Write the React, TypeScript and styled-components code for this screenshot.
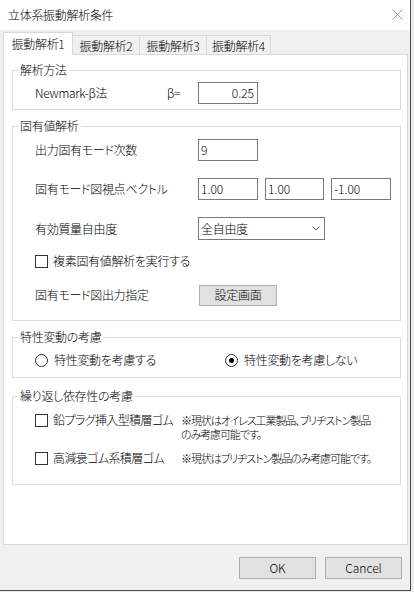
import styled, { createGlobalStyle } from "styled-components";

const GlobalStyle = createGlobalStyle`
	html, body {
		margin: 0;
		padding: 0;
		background: #ececec;
	}

	body {
		font-family: "Noto Sans CJK JP", "Noto Sans", sans-serif;
		font-size: 12px;
		font-weight: 300;
		letter-spacing: -0.3px;
		color: #000;
		font-feature-settings: "palt";
	}

	* {
		box-sizing: border-box;
	}
`;

const Window = styled.div`
	display: flex;
	flex-direction: column;
	width: 411px;
	height: 591px;
	background: #f0f0f0;
	border-right: 1px solid #4a4a4a;
	border-bottom: 1px solid #4a4a4a;
`;

const TitleBar = styled.div`
	display: flex;
	align-items: center;
	justify-content: space-between;
	height: 30px;
	padding: 0 7px 0 8px;
	background: #fff;
	line-height: 16px;
`;

const CloseIcon = styled.svg`
	width: 11px;
	height: 11px;
	margin-top: -2px;
`;

const TabStrip = styled.div`
	display: flex;
	align-items: flex-end;
	height: 24px;
	padding-left: 3px;
`;

const Tab = styled.div<{ $active?: boolean; $width: number }>`
	display: flex;
	align-items: center;
	justify-content: center;
	width: ${({ $width }) => $width}px;
	height: ${({ $active }) => ($active ? 23 : 19)}px;
	margin-bottom: ${({ $active }) => ($active ? -1 : 0)}px;
	padding-top: ${({ $active }) => ($active ? 0 : 2)}px;
	position: relative;
	z-index: ${({ $active }) => ($active ? 1 : 0)};
	border: 1px solid #d9d9d9;
	border-bottom: none;
	background: ${({ $active }) => ($active ? "#fff" : "#f0f0f0")};
	line-height: 16px;

	& + & {
		margin-left: -1px;
	}
`;

const Panel = styled.div`
	display: flex;
	flex-direction: column;
	height: 491px;
	margin: 0 2px 0 3px;
	padding: 0 6px 0 8px;
	border: 1px solid #d9d9d9;
	background: #fff;
`;

const Group = styled.fieldset<{ $mt: number }>`
	margin: ${({ $mt }) => $mt}px 0 0;
	padding: 0;
	min-width: 0;
	border: 1px solid #dcdcdc;

	legend {
		margin-left: 5px;
		padding: 0 2px;
		line-height: 16px;
	}
`;

const GroupBody = styled.div<{ $pb: number }>`
	padding: 0 0 ${({ $pb }) => $pb}px 22px;
`;

const Row = styled.div<{ $mt: number; $h?: number }>`
	display: flex;
	align-items: center;
	height: ${({ $h }) => $h ?? 22}px;
	margin-top: ${({ $mt }) => $mt}px;
	line-height: 16px;
`;

const Label = styled.span<{ $width: number }>`
	flex: none;
	width: ${({ $width }) => $width}px;
	white-space: nowrap;
`;

const Field = styled.div<{ $align?: "left" | "right"; $width?: number }>`
	display: flex;
	align-items: center;
	justify-content: ${({ $align }) => ($align === "right" ? "flex-end" : "flex-start")};
	width: ${({ $width }) => $width ?? 60}px;
	height: 22px;
	padding: 0 3px 0 2px;
	border: 1px solid #7a7a7a;
	background: #fff;
	letter-spacing: 0;
`;

const FieldGroup = styled.div`
	display: flex;
	gap: 7px;
`;

const Select = styled.div`
	display: flex;
	align-items: center;
	justify-content: space-between;
	width: 127px;
	height: 23px;
	padding: 0 4px 0 2px;
	border: 1px solid #7a7a7a;
	background: #fff;
`;

const Chevron = styled.svg`
	width: 8px;
	height: 5px;
`;

const Check = styled.span`
	flex: none;
	width: 13px;
	height: 13px;
	margin-right: 5px;
	border: 1px solid #333;
	background: #fff;
`;

const Radio = styled.span<{ $checked?: boolean }>`
	flex: none;
	display: flex;
	align-items: center;
	justify-content: center;
	width: 13px;
	height: 13px;
	margin-right: 6px;
	border: 1px solid #333;
	border-radius: 50%;
	background: #fff;

	&::after {
		content: "";
		width: 5px;
		height: 5px;
		border-radius: 50%;
		background: ${({ $checked }) => ($checked ? "#000" : "transparent")};
	}
`;

const Option = styled.div<{ $width?: number }>`
	display: flex;
	align-items: center;
	width: ${({ $width }) => ($width ? `${$width}px` : "auto")};
`;

const Button = styled.div<{ $width: number; $height: number }>`
	display: flex;
	align-items: center;
	justify-content: center;
	width: ${({ $width }) => $width}px;
	height: ${({ $height }) => $height}px;
	border: 1px solid #adadad;
	background: #e1e1e1;
	line-height: 16px;
`;

const OptionRow = styled.div<{ $mt: number }>`
	display: grid;
	grid-template-columns: 146px auto;
	margin-top: ${({ $mt }) => $mt}px;
`;

const OptionLabel = styled.div`
	display: flex;
	align-items: center;
	height: 22px;
	line-height: 16px;
	white-space: nowrap;
	letter-spacing: -0.6px;
`;

const Note = styled.div`
	padding-top: 4px;
	font-size: 11px;
	line-height: 14px;
	letter-spacing: -1.1px;
	white-space: nowrap;
`;

const Footer = styled.div`
	display: flex;
	justify-content: flex-end;
	gap: 9px;
	padding: 12px 8px 0 0;
	letter-spacing: 0;
`;

export default function App() {
	return (
		<>
			<GlobalStyle />
			<Window>
				<TitleBar>
					<span>立体系振動解析条件</span>
					<CloseIcon viewBox="0 0 11 11">
						<path d="M0.5 0.5L10.5 10.5M10.5 0.5L0.5 10.5" stroke="#9a9a9a" strokeWidth="1" fill="none" />
					</CloseIcon>
				</TitleBar>
				<TabStrip>
					<Tab $active $width={70}>振動解析1</Tab>
					<Tab $width={68}>振動解析2</Tab>
					<Tab $width={68}>振動解析3</Tab>
					<Tab $width={65}>振動解析4</Tab>
				</TabStrip>
				<Panel>
					<Group $mt={7}>
						<legend>解析方法</legend>
						<GroupBody $pb={5}>
							<Row $mt={4}>
								<Label $width={132}>Newmark-β法</Label>
								<Label $width={31}>β=</Label>
								<Field $align="right">0.25</Field>
							</Row>
						</GroupBody>
					</Group>

					<Group $mt={8}>
						<legend>固有値解析</legend>
						<GroupBody $pb={14}>
							<Row $mt={5}>
								<Label $width={163}>出力固有モード次数</Label>
								<Field>9</Field>
							</Row>
							<Row $mt={17}>
								<Label $width={163}>固有モード図視点ベクトル</Label>
								<FieldGroup>
									<Field>1.00</Field>
									<Field $width={59}>1.00</Field>
									<Field>-1.00</Field>
								</FieldGroup>
							</Row>
							<Row $mt={17} $h={23}>
								<Label $width={163}>有効質量自由度</Label>
								<Select>
									<span>全自由度</span>
									<Chevron viewBox="0 0 8 5">
										<path d="M0.5 0.5L4 4L7.5 0.5" stroke="#555" strokeWidth="1" fill="none" />
									</Chevron>
								</Select>
							</Row>
							<Row $mt={10}>
								<Check />
								<span>複素固有値解析を実行する</span>
							</Row>
							<Row $mt={12}>
								<Label $width={164}>固有モード図出力指定</Label>
								<Button $width={78} $height={21}>設定画面</Button>
							</Row>
						</GroupBody>
					</Group>

					<Group $mt={8}>
						<legend>特性変動の考慮</legend>
						<GroupBody $pb={6}>
							<Row $mt={4}>
								<Option $width={190}>
									<Radio />
									<span>特性変動を考慮する</span>
								</Option>
								<Option>
									<Radio $checked />
									<span>特性変動を考慮しない</span>
								</Option>
							</Row>
						</GroupBody>
					</Group>

					<Group $mt={10}>
						<legend>繰り返し依存性の考慮</legend>
						<GroupBody $pb={15}>
							<OptionRow $mt={5}>
								<OptionLabel>
									<Check />
									<span>鉛プラグ挿入型積層ゴム</span>
								</OptionLabel>
								<Note>
									※現状はオイレス工業製品、ブリヂストン製品
									<br />
									のみ考慮可能です。
								</Note>
							</OptionRow>
							<OptionRow $mt={6}>
								<OptionLabel>
									<Check />
									<span>高減衰ゴム系積層ゴム</span>
								</OptionLabel>
								<Note>※現状はブリヂストン製品のみ考慮可能です。</Note>
							</OptionRow>
						</GroupBody>
					</Group>
				</Panel>
				<Footer>
					<Button $width={77} $height={22}>OK</Button>
					<Button $width={77} $height={22}>Cancel</Button>
				</Footer>
			</Window>
		</>
	);
}
